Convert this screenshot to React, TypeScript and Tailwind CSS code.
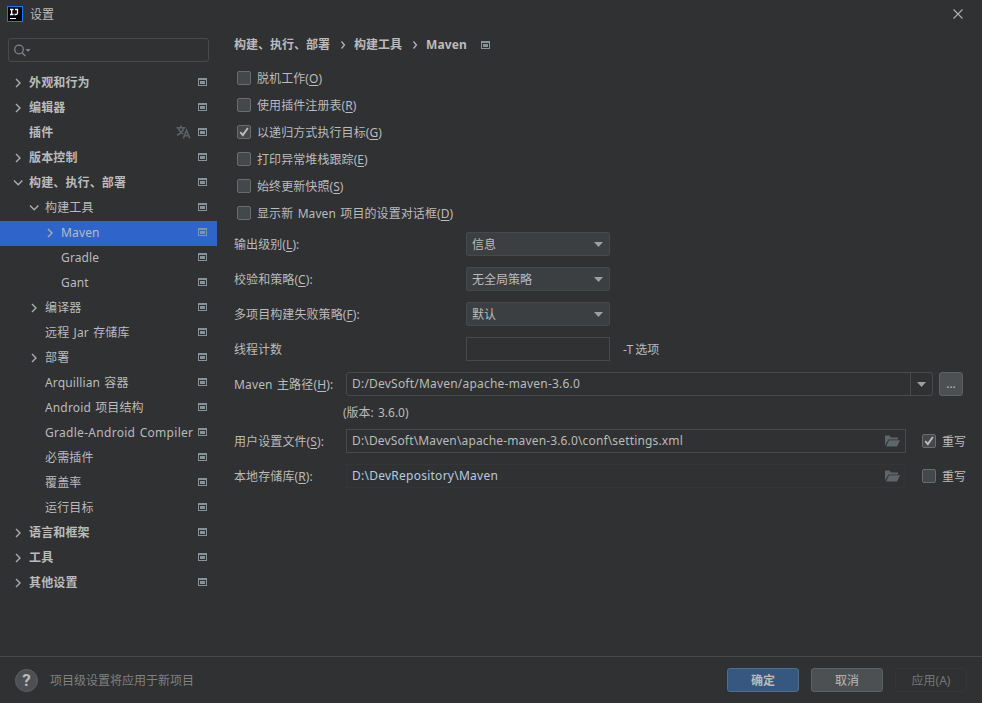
import { useState } from 'react';
import type { ReactNode } from 'react';

type TreeItem = {
  label: string;
  level: 0 | 1 | 2;
  arrow?: 'right' | 'down';
  translate?: boolean;
};

const treeItems: TreeItem[] = [
  { label: '外观和行为', level: 0, arrow: 'right' },
  { label: '编辑器', level: 0, arrow: 'right' },
  { label: '插件', level: 0, translate: true },
  { label: '版本控制', level: 0, arrow: 'right' },
  { label: '构建、执行、部署', level: 0, arrow: 'down' },
  { label: '构建工具', level: 1, arrow: 'down' },
  { label: 'Maven', level: 2, arrow: 'right' },
  { label: 'Gradle', level: 2 },
  { label: 'Gant', level: 2 },
  { label: '编译器', level: 1, arrow: 'right' },
  { label: '远程 Jar 存储库', level: 1 },
  { label: '部署', level: 1, arrow: 'right' },
  { label: 'Arquillian 容器', level: 1 },
  { label: 'Android 项目结构', level: 1 },
  { label: 'Gradle-Android Compiler', level: 1 },
  { label: '必需插件', level: 1 },
  { label: '覆盖率', level: 1 },
  { label: '运行目标', level: 1 },
  { label: '语言和框架', level: 0, arrow: 'right' },
  { label: '工具', level: 0, arrow: 'right' },
  { label: '其他设置', level: 0, arrow: 'right' },
];

const options = [
  { label: '脱机工作', hotkey: 'O', on: false },
  { label: '使用插件注册表', hotkey: 'R', on: false },
  { label: '以递归方式执行目标', hotkey: 'G', on: true },
  { label: '打印异常堆栈跟踪', hotkey: 'E', on: false },
  { label: '始终更新快照', hotkey: 'S', on: false },
  { label: '显示新 Maven 项目的设置对话框', hotkey: 'D', on: false },
];

const selects = [
  { label: '输出级别', hotkey: 'L', value: '信息' },
  { label: '校验和策略', hotkey: 'C', value: '无全局策略' },
  { label: '多项目构建失败策略', hotkey: 'F', value: '默认' },
];

const indent = { 0: 'pl-[13px]', 1: 'pl-[29px]', 2: 'pl-[45px]' };

function ProjectIcon() {
  return (
    <svg width="9" height="8" viewBox="0 0 9 8" className="shrink-0" shapeRendering="crispEdges">
      <path d="M0 0h9v8H0zM1 2v5h7V2z" fill="#87939a" fillRule="evenodd" />
      <path d="M2 3h5v3H2z" fill="#87939a" />
    </svg>
  );
}

function Arrow({ dir }: { dir?: 'right' | 'down' }) {
  return (
    <svg width="10" height="10" viewBox="0 0 10 10" className="mb-0.5 shrink-0" fill="none" stroke="#adadad" strokeWidth="1.4">
      {dir === 'right' && <path d="M3 1l4 4-4 4" />}
      {dir === 'down' && <path d="M1 2.5l4.2 4.2L9.4 2.5" />}
    </svg>
  );
}

function Triangle() {
  return (
    <svg width="9" height="5" viewBox="0 0 9 5" className="shrink-0">
      <path d="M0 0h9L4.5 5z" fill="#9da0a2" />
    </svg>
  );
}

function TranslateIcon() {
  return (
    <svg width="15" height="14" viewBox="0 0 15 14" className="mr-[7px] mb-[3px] shrink-0" fill="none" stroke="#5d6163" strokeWidth="1.6">
      <path d="M0.5 2.7h9M5 0.5v2M2.2 3C3 5.5 5 7.8 7.3 9M7.8 3C7 6 4.5 8.6 1 10.2" />
      <path d="M7.3 13.5l3.2-8.3 3.3 8.3M8.5 10.8h4.2" />
    </svg>
  );
}

function FolderIcon() {
  return (
    <svg width="15" height="12" viewBox="0 0 15 12" className="shrink-0">
      <path d="M0 0.5h4.5l1.5 2H13v2H3.5L0 10.5z" fill="#5f6669" />
      <path d="M4 5.3h11L12 11.5H1z" fill="#5f6669" />
    </svg>
  );
}

function Hotkey({ children, letter, colon }: { children: ReactNode; letter: string; colon?: boolean }) {
  return (
    <span className="whitespace-pre">
      {children}(<span className="underline decoration-1 underline-offset-2">{letter}</span>){colon && ':'}
    </span>
  );
}

function Checkbox({ defaultOn, children }: { defaultOn: boolean; children: ReactNode }) {
  const [on, setOn] = useState(defaultOn);

  return (
    <button onClick={() => setOn(!on)} className="flex items-center gap-1.5 h-[27px] text-left">
      <span className="w-3.5 h-3.5 shrink-0 rounded-[2px] border border-[#6b6b6b] bg-[#43494a]">
        {on && (
          <svg width="12" height="12" viewBox="0 0 12 12" fill="none" stroke="#bdbdbd" strokeWidth="1.9">
            <path d="M2.3 6.2l2.5 2.9L9.9 2" />
          </svg>
        )}
      </span>
      <span className="pt-0.5 tracking-[0.08px] [word-spacing:1.2px]">{children}</span>
    </button>
  );
}

export default function App() {
  const [selected, setSelected] = useState('Maven');

  return (
    <div className="w-[982px] h-[703px] flex flex-col overflow-hidden bg-[#2f3132] text-[#bbbbbb] text-[12px] leading-4 [word-spacing:1px] font-['Noto_Sans','Noto_Sans_CJK_SC',sans-serif]">
      {/* Title bar */}
      <div className="h-[29px] shrink-0 flex items-center pl-[7px] pr-[19px]">
        <svg width="16" height="16" viewBox="0 0 16 16" className="mb-px">
          <rect x="0.5" y="0.5" width="15" height="15" fill="#000" stroke="#087cfa" />
          <path d="M3 3.5h3.500M4.700 3.500v5M3 8.500h3.500M8 3.500h2.500v3.500Q10.500 8.500 9 8.500H7.500" fill="none" stroke="#fff" strokeWidth="1.3" />
          <path d="M3 12.5h6" stroke="#fff" />
        </svg>
        <span className="ml-[7px]">设置</span>
        <svg width="10" height="10" viewBox="0 0 10 10" className="ml-auto mb-px" stroke="#b0b0b0" strokeWidth="1.1">
          <path d="M0.5 0.5l9 9M9.5 0.5l-9 9" />
        </svg>
      </div>

      <div className="flex-1 flex min-h-0">
        {/* Settings tree */}
        <div className="w-[217px] shrink-0 pt-[9px]">
          <div className="ml-2 w-[201px] h-6 border border-[#484a4b] rounded-[3px] flex items-center pl-[5px]">
            <svg width="17" height="13" viewBox="0 0 17 13" fill="none" stroke="#7b858a" strokeWidth="1.3">
              <circle cx="5" cy="5.5" r="4.3" />
              <path d="M8 8.7l3.3 3.3" />
              <path d="M11.5 5h5L14 8z" fill="#7b858a" stroke="none" />
            </svg>
          </div>
          <div className="mt-[9px]">
            {treeItems.map((item) => (
              <div
                key={item.label}
                onClick={() => setSelected(item.label)}
                className={`h-[25px] flex items-center pr-2.5 ${indent[item.level]} ${
                  item.level === 0 ? 'font-bold' : ''
                } ${selected === item.label ? 'bg-[#2f65ca]' : ''}`}
              >
                <Arrow dir={item.arrow} />
                <span
                  className={`ml-1.5 mr-auto pb-px whitespace-pre ${
                    item.label.length > 20 ? 'tracking-[0.29px]' : 'tracking-[0.14px]'
                  }`}
                >
                  {item.label}
                </span>
                {item.translate && <TranslateIcon />}
                <div className="mb-[3px]">
                  <ProjectIcon />
                </div>
              </div>
            ))}
          </div>
        </div>

        {/* Maven page */}
        <div className="flex-1 pl-[17px] pt-2">
          <div className="h-4 flex items-center font-bold">
            <span>构建、执行、部署</span>
            <svg width="6" height="8" viewBox="0 0 6 8" className="ml-2.5 mr-2 shrink-0" fill="none" stroke="#bbbbbb" strokeWidth="1.2">
              <path d="M1.5 0.5L4.5 4l-3 3.5" />
            </svg>
            <span>构建工具</span>
            <svg width="6" height="8" viewBox="0 0 6 8" className="ml-2.5 mr-2 shrink-0" fill="none" stroke="#bbbbbb" strokeWidth="1.2">
              <path d="M1.5 0.5L4.5 4l-3 3.5" />
            </svg>
            <span className="w-[55px] tracking-[0.1px]">Maven</span>
            <ProjectIcon />
          </div>

          <div className="mt-[11px] ml-[3px] flex flex-col">
            {options.map((o) => (
              <Checkbox key={o.hotkey} defaultOn={o.on}>
                <Hotkey letter={o.hotkey}>{o.label}</Hotkey>
              </Checkbox>
            ))}
          </div>

          <div className="mt-1.5 flex flex-col gap-[11px]">
            {selects.map((s) => (
              <div key={s.hotkey} className="h-6 flex items-center">
                <span className="w-[232px] pt-px tracking-[0.08px]">
                  <Hotkey letter={s.hotkey} colon>{s.label}</Hotkey>
                </span>
                <div className="w-36 h-6 px-[5px] pr-1.5 flex items-center justify-between rounded-[2px] border border-[#46494a] bg-[#3c3f41]">
                  <span className="pt-px">{s.value}</span>
                  <Triangle />
                </div>
              </div>
            ))}
            <div className="h-6 flex items-center">
              <span className="w-[232px] pt-px">线程计数</span>
              <div className="w-36 h-6 border border-[#484a4b]" />
              <span className="ml-[13px] pt-px [word-spacing:-1px]">-T 选项</span>
            </div>
          </div>

          {/* Paths */}
          <div className="mt-[11px] h-6 flex items-center">
            <span className="w-[112px] pt-px tracking-[0.15px]">
              <Hotkey letter="H" colon>Maven 主路径</Hotkey>
            </span>
            <div className="w-[587px] h-6 flex items-center rounded-[3px] border border-[#484a4b]">
              <span className="flex-1 pl-[5px] tracking-[0.21px]">D:/DevSoft/Maven/apache-maven-3.6.0</span>
              <div className="w-[22px] h-full flex items-center justify-center border-l border-[#484a4b]">
                <Triangle />
              </div>
            </div>
            <button className="ml-1.5 w-6 h-6 rounded-[3px] border border-[#5e6162] bg-[#4c5052]">...</button>
          </div>
          <div className="ml-[109px] h-[33px] flex items-center">(版本: 3.6.0)</div>
          <div className="h-6 flex items-center">
            <span className="w-[112px] pt-px tracking-[0.1px]">
              <Hotkey letter="S" colon>用户设置文件</Hotkey>
            </span>
            <div className="w-[560px] h-6 pl-[5px] pr-[5px] mr-4 flex items-center justify-between border border-[#484a4b]">
              <span className="tracking-[0.15px]">D:\DevSoft\Maven\apache-maven-3.6.0\conf\settings.xml</span>
              <FolderIcon />
            </div>
            <Checkbox defaultOn>重写</Checkbox>
          </div>
          <div className="mt-[11px] h-6 flex items-center">
            <span className="w-[112px] pt-px tracking-[0.1px]">
              <Hotkey letter="R" colon>本地存储库</Hotkey>
            </span>
            <div className="w-[560px] h-6 pl-[5px] pr-[5px] mr-4 flex items-center justify-between border border-[#333536]">
              <span className="tracking-[0.25px] text-[#b3cbe0]">D:\DevRepository\Maven</span>
              <FolderIcon />
            </div>
            <Checkbox defaultOn={false}>重写</Checkbox>
          </div>
        </div>
      </div>

      {/* Footer */}
      <div className="h-[47px] shrink-0 flex items-center border-t border-[#47494b] pl-[15px] pr-[15px]">
        <div className="w-[23px] h-[23px] rounded-full border border-[#5e6162] bg-[#4c5052] flex items-center justify-center text-[17px] font-bold font-['Roboto',sans-serif]">
          ?
        </div>
        <span className="ml-3 pt-px text-[#7f8182]">项目级设置将应用于新项目</span>
        <div className="ml-auto flex gap-3">
          <button className="w-[72px] h-6 pt-px rounded-[3px] border border-[#4c708c] bg-[#365880] font-bold">确定</button>
          <button className="w-[72px] h-6 pt-px rounded-[3px] border border-[#5e6162] bg-[#4c5052]">取消</button>
          <button className="w-[72px] h-6 pt-px rounded-[3px] border border-[#343637] text-[#777777]">应用(A)</button>
        </div>
      </div>
    </div>
  );
}
